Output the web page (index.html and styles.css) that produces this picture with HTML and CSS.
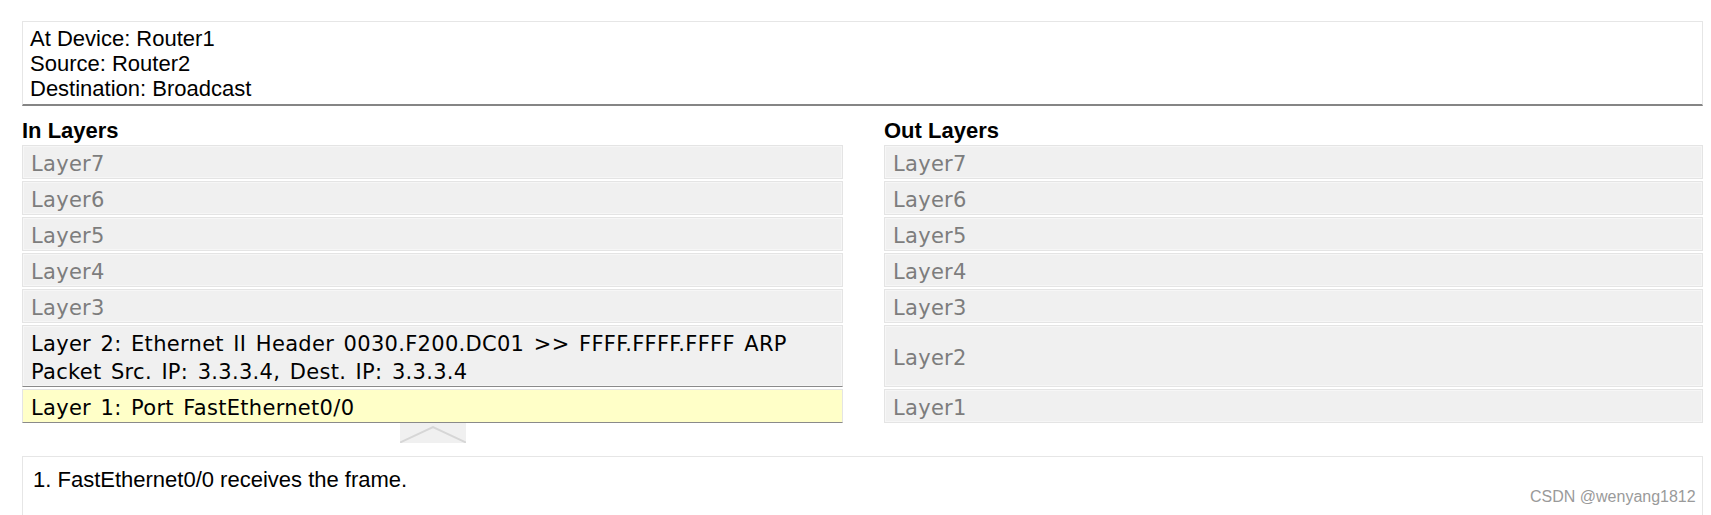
FILE: index.html
```html
<!DOCTYPE html>
<html>
<head>
<meta charset="utf-8">
<link rel="stylesheet" href="styles.css">
</head>
<body>
<div class="page">
  <div class="info">
    <div>At Device: Router1</div>
    <div>Source: Router2</div>
    <div>Destination: Broadcast</div>
  </div>
  <div class="layers">
    <div class="col">
      <div class="heading">In Layers</div>
      <div class="row dim">Layer7</div>
      <div class="row dim">Layer6</div>
      <div class="row dim">Layer5</div>
      <div class="row dim">Layer4</div>
      <div class="row dim">Layer3</div>
      <div class="row tall active">Layer 2: Ethernet II Header 0030.F200.DC01 &gt;&gt; FFFF.FFFF.FFFF ARP<br>Packet Src. IP: 3.3.3.4, Dest. IP: 3.3.3.4</div>
      <div class="row active current">Layer 1: Port FastEthernet0/0</div>
      <div class="arrow">
        <svg width="66" height="20" viewBox="0 0 66 20"><polyline points="0,19.5 33,4 66,19.5" fill="none" stroke="#d6d6d6" stroke-width="2"/></svg>
      </div>
    </div>
    <div class="col">
      <div class="heading">Out Layers</div>
      <div class="row dim">Layer7</div>
      <div class="row dim">Layer6</div>
      <div class="row dim">Layer5</div>
      <div class="row dim">Layer4</div>
      <div class="row dim">Layer3</div>
      <div class="row tall dim">Layer2</div>
      <div class="row dim">Layer1</div>
    </div>
  </div>
  <div class="desc">1. FastEthernet0/0 receives the frame.</div>
</div>
<div class="watermark">CSDN @wenyang1812</div>
</body>
</html>
```
FILE: styles.css
```css
html, body {
  margin: 0;
  padding: 0;
  background: #ffffff;
  overflow: hidden;
  height: 515px;
}
.page {
  padding: 21px 8px 0 22px;
  font-family: "Liberation Sans", Arial, sans-serif;
  color: #000;
}
.info {
  height: 85px;
  box-sizing: border-box;
  border: 1px solid #e6e6e6;
  border-bottom: 2px solid #858585;
  padding: 4px 7px 3px 7px;
  font-size: 22px;
  line-height: 25px;
}
.layers {
  display: grid;
  grid-template-columns: 821px 1fr;
  column-gap: 41px;
}
.col {
  display: flex;
  flex-direction: column;
}
.heading {
  font-weight: bold;
  font-size: 22px;
  line-height: 24px;
  padding-top: 13px;
  margin-bottom: 2px;
}
.row {
  height: 34px;
  box-sizing: border-box;
  margin-bottom: 2px;
  background: #f0f0f0;
  border: 1px solid #e4e4e4;
  box-shadow: inset 0 0 0 1px #f6f6f6;
  display: flex;
  align-items: center;
  padding: 4px 0 0 8px;
  font-family: "DejaVu Sans", Verdana, sans-serif;
  font-size: 21px;
  letter-spacing: 0.3px;
  word-spacing: 2.5px;
  color: #000;
}
.row.dim {
  color: #7d7d7d;
}
.row.tall {
  height: 62px;
  line-height: 28px;
}
.row.active {
  border-bottom: 1px solid #8a8a8a;
}
.row.current {
  background: #ffffc8;
  box-shadow: none;
  margin-bottom: 0;
}
.arrow {
  align-self: center;
  width: 66px;
  height: 20px;
  background: #f0f0f0;
  display: flex;
  margin-left: 1px;
}
.desc {
  margin-top: 13px;
  height: 100px;
  box-sizing: border-box;
  border: 1px solid #e6e6e6;
  padding: 10px 10px 0 10px;
  font-size: 22px;
  line-height: 25px;
}
.watermark {
  position: absolute;
  left: 1530px;
  top: 487px;
  font-family: "Liberation Sans", Arial, sans-serif;
  font-size: 16px;
  line-height: 20px;
  color: #9a9a9a;
}
```
